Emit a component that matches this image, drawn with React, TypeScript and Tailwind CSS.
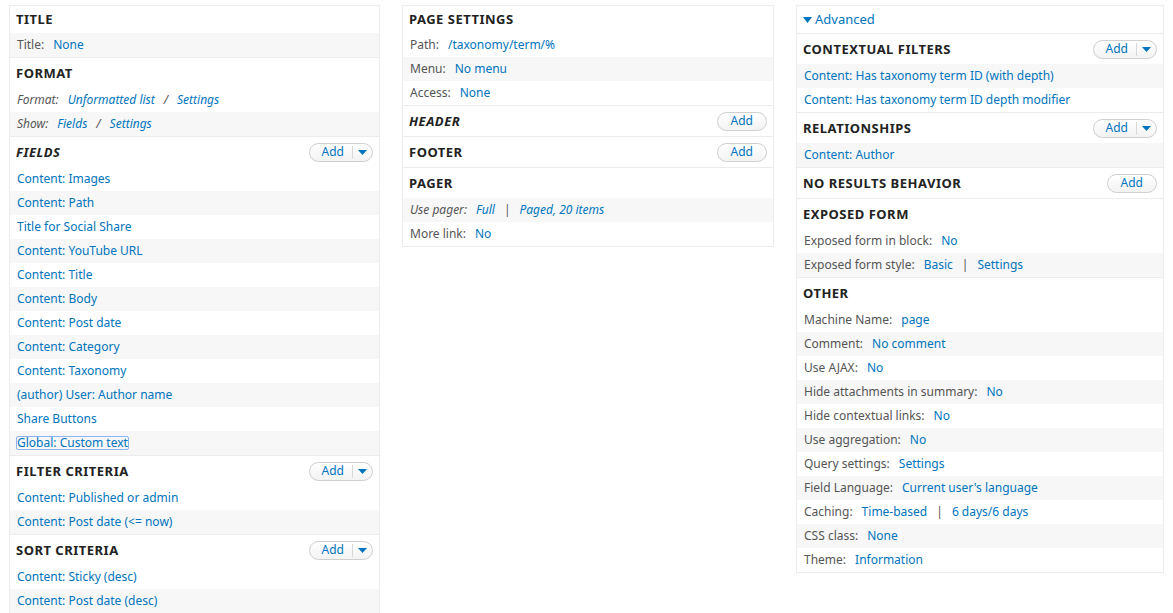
import React from "react";

type Part = { t: string; link?: boolean; sep?: boolean };
type Row = { parts: Part[]; grey?: boolean; italic?: boolean; focus?: boolean };
type Section = { title: string; italic?: boolean; add?: "split" | "plain"; rows: Row[] };

const L = (t: string): Part => ({ t, link: true });
const T = (t: string): Part => ({ t });
const S: Part = { t: "|", sep: true };
const I: Part = { t: "/", sep: true };

function AddButton({ kind }: { kind: "split" | "plain" }) {
  return (
    <span className="inline-flex h-[19px] items-center rounded-full border border-[#cfcfcf] bg-gradient-to-b from-white to-[#f3f3f3] text-[12px] text-[#0074bd]">
      <span className={kind === "split" ? "pl-3 pr-2" : "px-[13px]"}>Add</span>
      {kind === "split" ? (
        <span className="flex h-[13px] items-center border-l border-[#d8d8d8] px-[5px]">
          <svg width="9" height="5" viewBox="0 0 9 5"><path d="M0 0h9L4.5 5z" fill="#0074bd" /></svg>
        </span>
      ) : null}
    </span>
  );
}

function Panel({ sections, top }: { sections: Section[]; top?: React.ReactNode }) {
  return (
    <div className="border border-[#ececec] bg-white">
      {top}
      {sections.map((s, i) => (
        <div key={i} className={i > 0 || top ? "border-t border-[#ececec]" : ""}>
          <div className={`flex items-center justify-between px-[6px] ${i === 0 && !top ? "h-[27px]" : "h-[30px]"}`}>
            <span className={`text-[13px] font-bold tracking-[0.5px] text-[#222] ${s.italic ? "italic" : ""}`}>{s.title}</span>
            {s.add ? <AddButton kind={s.add} /> : null}
          </div>
          {s.rows.map((r, j) => (
            <div key={j} className={`flex h-[24px] items-center px-[7px] ${r.grey ? "bg-[#f7f7f7]" : ""} ${r.italic ? "italic" : ""}`}>
              <span className={r.focus ? "-ml-[1px] rounded-[2px] border border-[#8fb4f2] px-0" : ""}>
                {r.parts.map((p, k) => (
                  <span key={k} className={p.link ? "text-[#0074bd]" : p.sep ? "mx-[9px] text-[#555]" : "mr-[9px] text-[#555]"}>
                    {p.t}
                  </span>
                ))}
              </span>
            </div>
          ))}
        </div>
      ))}
    </div>
  );
}

const alt = (list: Part[][], startGrey = false): Row[] => list.map((parts, i) => ({ parts, grey: (i % 2 === 0) === startGrey }));

const left: Section[] = [
  { title: "TITLE", rows: [{ parts: [T("Title:"), L("None")], grey: true }] },
  {
    title: "FORMAT",
    rows: [
      { parts: [T("Format:"), L("Unformatted list"), I, L("Settings")], italic: true },
      { parts: [T("Show:"), L("Fields"), I, L("Settings")], italic: true, grey: true },
    ],
  },
  {
    title: "FIELDS",
    italic: true,
    add: "split",
    rows: [
      ...alt(
        [
          "Content: Images",
          "Content: Path",
          "Title for Social Share",
          "Content: YouTube URL",
          "Content: Title",
          "Content: Body",
          "Content: Post date",
          "Content: Category",
          "Content: Taxonomy",
          "(author) User: Author name",
          "Share Buttons",
        ].map((t) => [L(t)])
      ),
      { parts: [L("Global: Custom text")], grey: true, focus: true },
    ],
  },
  { title: "FILTER CRITERIA", add: "split", rows: alt([[L("Content: Published or admin")], [L("Content: Post date (<= now)")]]) },
  { title: "SORT CRITERIA", add: "split", rows: alt([[L("Content: Sticky (desc)")], [L("Content: Post date (desc)")]]) },
];

const mid: Section[] = [
  {
    title: "PAGE SETTINGS",
    rows: [
      { parts: [T("Path:"), L("/taxonomy/term/%")] },
      { parts: [T("Menu:"), L("No menu")], grey: true },
      { parts: [T("Access:"), L("None")] },
    ],
  },
  { title: "HEADER", italic: true, add: "plain", rows: [] },
  { title: "FOOTER", add: "plain", rows: [] },
  {
    title: "PAGER",
    rows: [
      { parts: [T("Use pager:"), L("Full"), S, L("Paged, 20 items")], italic: true, grey: true },
      { parts: [T("More link:"), L("No")] },
    ],
  },
];

const right: Section[] = [
  {
    title: "CONTEXTUAL FILTERS",
    add: "split",
    rows: alt([[L("Content: Has taxonomy term ID (with depth)")], [L("Content: Has taxonomy term ID depth modifier")]], true),
  },
  { title: "RELATIONSHIPS", add: "split", rows: alt([[L("Content: Author")]], true) },
  { title: "NO RESULTS BEHAVIOR", add: "plain", rows: [] },
  {
    title: "EXPOSED FORM",
    rows: alt([
      [T("Exposed form in block:"), L("No")],
      [T("Exposed form style:"), L("Basic"), S, L("Settings")],
    ]),
  },
  {
    title: "OTHER",
    rows: alt([
      [T("Machine Name:"), L("page")],
      [T("Comment:"), L("No comment")],
      [T("Use AJAX:"), L("No")],
      [T("Hide attachments in summary:"), L("No")],
      [T("Hide contextual links:"), L("No")],
      [T("Use aggregation:"), L("No")],
      [T("Query settings:"), L("Settings")],
      [T("Field Language:"), L("Current user's language")],
      [T("Caching:"), L("Time-based"), S, L("6 days/6 days")],
      [T("CSS class:"), L("None")],
      [T("Theme:"), L("Information")],
    ]),
  },
];

export default function App() {
  return (
    <div className="flex h-[613px] w-[1173px] items-start gap-[22px] overflow-hidden bg-white pl-[9px] pt-[5px] font-['DejaVu_Sans',sans-serif] text-[12px] leading-none">
      <div className="w-[371px] shrink-0">
        <Panel sections={left} />
      </div>
      <div className="w-[372px] shrink-0">
        <Panel sections={mid} />
      </div>
      <div className="w-[368px] shrink-0">
        <Panel
          sections={right}
          top={
            <div className="flex h-[27px] items-center gap-[3px] px-[6px] text-[13px] text-[#0074bd]">
              <svg width="9" height="6" viewBox="0 0 9 6"><path d="M0 0h9L4.5 6z" fill="#0074bd" /></svg>
              Advanced
            </div>
          }
        />
      </div>
    </div>
  );
}
